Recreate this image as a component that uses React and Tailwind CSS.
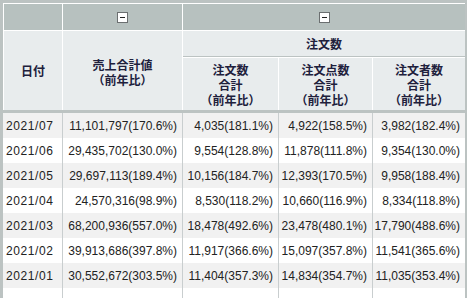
import React from "react";

const rows = [
  ["2021/07", "11,101,797(170.6%)", "4,035(181.1%)", "4,922(158.5%)", "3,982(182.4%)"],
  ["2021/06", "29,435,702(130.0%)", "9,554(128.8%)", "11,878(111.8%)", "9,354(130.0%)"],
  ["2021/05", "29,697,113(189.4%)", "10,156(184.7%)", "12,393(170.5%)", "9,958(188.4%)"],
  ["2021/04", "24,570,316(98.9%)", "8,530(118.2%)", "10,660(116.9%)", "8,334(118.8%)"],
  ["2021/03", "68,200,936(557.0%)", "18,478(492.6%)", "23,478(480.1%)", "17,790(488.6%)"],
  ["2021/02", "39,913,686(397.8%)", "11,917(366.6%)", "15,097(357.8%)", "11,541(365.6%)"],
  ["2021/01", "30,552,672(303.5%)", "11,404(357.3%)", "14,834(354.7%)", "11,035(353.4%)"],
  ["", "", "", "", ""],
];

function Collapse() {
  return (
    <span className="flex h-[11px] w-[11px] items-center justify-center border border-[#6b6f70] bg-white">
      <span className="h-px w-[5px] bg-[#222]" />
    </span>
  );
}

export default function App() {
  return (
    <div className="h-[298px] w-[467px] overflow-hidden bg-white">
      <div className="border-l-[3px] border-t-[3px] border-r-2 border-[#bcc3c2]">
        {/* header */}
        <div
          className="grid grid-cols-[58px_119px_95px_93px_92px] grid-rows-[26px_26px_52px] gap-px bg-white pl-px pt-px text-[12px] font-bold leading-[15px] text-[#20203c]"
          style={{ fontFamily: '"Noto Sans CJK JP", "Noto Sans", sans-serif' }}
        >
          <div className="bg-[#b7c1bf]" />
          <div className="flex items-center justify-center bg-[#b7c1bf]">
            <Collapse />
          </div>
          <div className="col-span-3 flex items-center justify-center bg-[#b7c1bf]">
            <Collapse />
          </div>

          <div className="row-span-2 flex items-center justify-center bg-[#e8eced]">日付</div>
          <div className="row-span-2 flex flex-col items-center justify-center bg-[#e8eced] pt-[3px]">
            <span>売上合計値</span>
            <span>（前年比）</span>
          </div>
          <div className="col-span-3 flex items-center justify-center border-b border-[#bcc3c2] bg-[#e8eced]">
            注文数
          </div>

          {["注文数", "注文点数", "注文者数"].map((t) => (
            <div key={t} className="flex flex-col items-center justify-center bg-[#e8eced] pt-px">
              <span>{t}</span>
              <span>合計</span>
              <span>（前年比）</span>
            </div>
          ))}
        </div>

        {/* body */}
        <div
          className="border-t-[3px] border-[#bcc3c2] text-[12px] text-[#222]"
          style={{ fontFamily: '"Liberation Sans", Arial, sans-serif' }}
        >
          {rows.map((r, i) => (
            <div
              key={i}
              className="grid h-[25px] grid-cols-[59px_119px_95px_93px_92px] gap-x-px bg-[#c9cecf]"
            >
              {r.map((c, j) => (
                <div
                  key={j}
                  className={
                    (i % 2 === 0 && i < 7 ? "bg-[#f1f1f1] " : "bg-white ") +
                    (j === 0
                      ? "flex items-center pl-[3px] tracking-[0.6px]"
                      : "flex items-center justify-end pr-[5px]")
                  }
                >
                  {c}
                </div>
              ))}
            </div>
          ))}
        </div>
      </div>
    </div>
  );
}
